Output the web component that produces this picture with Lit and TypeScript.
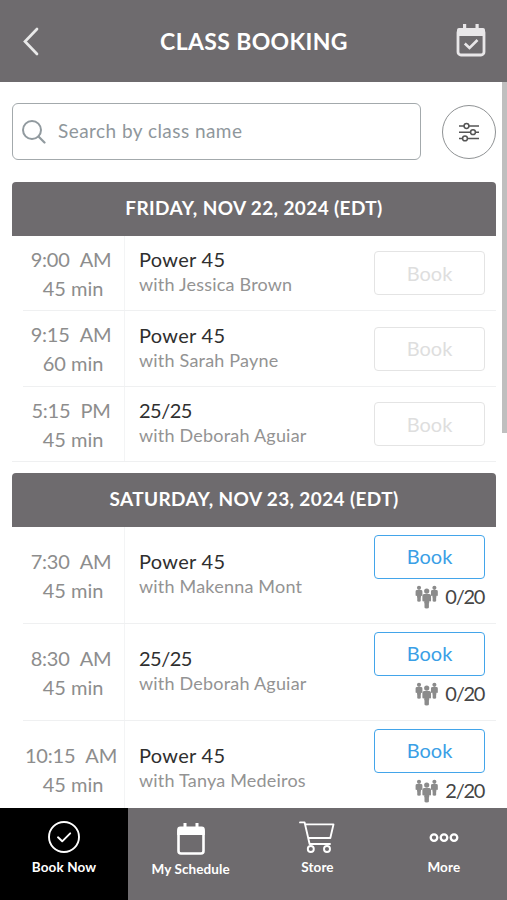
import { LitElement, html, css, svg, nothing } from "lit";
import { customElement, property } from "lit/decorators.js";

interface ClassItem {
  time: string;
  period: string;
  duration: string;
  name: string;
  coach: string;
  spots?: string;
}

interface Day {
  label: string;
  items: ClassItem[];
}

const DAYS: Day[] = [
  {
    label: "FRIDAY, NOV 22, 2024 (EDT)",
    items: [
      { time: "9:00", period: "AM", duration: "45 min", name: "Power 45", coach: "Jessica Brown" },
      { time: "9:15", period: "AM", duration: "60 min", name: "Power 45", coach: "Sarah Payne" },
      { time: "5:15", period: "PM", duration: "45 min", name: "25/25", coach: "Deborah Aguiar" },
    ],
  },
  {
    label: "SATURDAY, NOV 23, 2024 (EDT)",
    items: [
      { time: "7:30", period: "AM", duration: "45 min", name: "Power 45", coach: "Makenna Mont", spots: "0/20" },
      { time: "8:30", period: "AM", duration: "45 min", name: "25/25", coach: "Deborah Aguiar", spots: "0/20" },
      { time: "10:15", period: "AM", duration: "45 min", name: "Power 45", coach: "Tanya Medeiros", spots: "2/20" },
    ],
  },
];

const person = (x: number, y: number, s: number) => svg`
  <g transform="translate(${x} ${y}) scale(${s})">
    <circle cx="0" cy="2.400" r="2.700"></circle>
    <path d="M-2.600 5.400h5.200q1.900 0 1.900 1.800v5q0 .9-1 .9t-.9-.5v2.500h-.3v4.500q0 1-2.300 1t-2.300-1v-4.500h-.3v-2.500q0 .5-.9.5t-1-.9v-5q0-1.800 1.900-1.800z"></path>
  </g>`;

@customElement("class-row")
export class ClassRow extends LitElement {
  @property({ attribute: false }) item!: ClassItem;

  static styles = css`
    :host { display: block; }
    .row { display: flex; height: 100%; }
    .when {
      box-sizing: border-box;
      width: 102px;
      flex: none;
      border-right: 1.5px solid #f3f4f5;
      display: flex;
      flex-direction: column;
      justify-content: center;
      align-items: center;
      font-size: 20px;
      line-height: 29px;
      color: #8d8d8d;
      padding-top: 2px;
    }
    .time { margin-right: 5px; display: flex; gap: 10px; letter-spacing: -0.2px; }
    .duration { margin-right: 1px; }
    .what {
      flex: 1;
      display: flex;
      flex-direction: column;
      justify-content: center;
      padding-left: 14px;
      padding-bottom: 1px;
    }
    .name { font-size: 20px; line-height: 25px; color: #2f2f2f; letter-spacing: 0.3px; }
    .numeric { letter-spacing: -0.5px; }
    .coach { font-size: 18px; line-height: 25px; color: #939393; letter-spacing: 0.2px; }
    .action {
      width: 111px;
      flex: none;
      margin-right: 11px;
      display: flex;
      flex-direction: column;
      justify-content: center;
      padding-top: 1px;
    }
    .full { padding: 0 0 6px; }
    .book {
      box-sizing: border-box;
      height: 44px;
      border: 1.5px solid #e4e4e4;
      border-radius: 4px;
      display: flex;
      align-items: center;
      justify-content: center;
      font-size: 20px;
      color: #dedede;
      padding-bottom: 1px;
    }
    .open { border-color: #43a5ea; color: #3b9fe6; }
    .spots {
      display: flex;
      justify-content: flex-end;
      align-items: center;
      gap: 7px;
      height: 26px;
      margin-top: 4px;
      font-size: 20px;
      letter-spacing: -1.3px;
      color: #454545;
    }
    .people { width: 23px; height: 24px; fill: #8b8b8b; margin-top: 2px; }
    .count { margin-right: 1px; }
  `;

  render() {
    const { time, period, duration, name, coach, spots } = this.item;
    return html`
      <div class="row">
        <div class="when">
          <div class="time"><span>${time}</span><span>${period}</span></div>
          <div class="duration">${duration}</div>
        </div>
        <div class="what">
          <div class="name ${/[a-z]/i.test(name) ? "" : "numeric"}">${name}</div>
          <div class="coach">with ${coach}</div>
        </div>
        <div class="action ${spots ? "full" : ""}">
          <div class="book ${spots ? "open" : ""}">Book</div>
          ${spots
            ? html`<div class="spots">
                <svg class="people" viewBox="0 0 23 24">
                  ${person(4, 1, 0.76)}${person(19.4, 1, 0.76)}${person(11.7, 3.8, 0.96)}
                </svg>
                <span class="count">${spots}</span>
              </div>`
            : nothing}
        </div>
      </div>
    `;
  }
}

@customElement("app-root")
export class AppRoot extends LitElement {
  static styles = css`
    :host {
      display: flex;
      flex-direction: column;
      height: 900px;
      width: 507px;
      overflow: hidden;
      background: #fff;
      font-family: Lato, "Open Sans", sans-serif;
    }
    .header {
      flex: none;
      height: 82px;
      background: #6e6b6e;
      display: flex;
      align-items: center;
      justify-content: space-between;
      box-sizing: border-box;
      padding: 0 21px 0 23px;
    }
    .title { font-size: 23px; font-weight: 700; color: #fff; letter-spacing: 0.35px; margin-right: 1px; }
    .back { width: 30px; height: 30px; }
    .booked { width: 30px; height: 34px; margin-top: -3px; }
    .body { flex: 1; min-height: 0; display: flex; overflow: hidden; }
    .content { flex: 1; padding: 21px 6px 0 12px; }
    .scroll { width: 5px; height: 351px; background: #bfbfbf; }
    .tools { display: flex; align-items: center; gap: 21px; height: 57px; }
    .search {
      box-sizing: border-box;
      width: 409px;
      height: 57px;
      border: 1.5px solid #a3a9ac;
      border-radius: 6px;
      display: flex;
      align-items: center;
      padding-left: 9px;
      gap: 11px;
      font-size: 19px;
      letter-spacing: 0.45px;
      color: #8f979c;
    }
    .lens { width: 25px; height: 25px; }
    .placeholder { padding-bottom: 2px; }
    .filter {
      box-sizing: border-box;
      flex: none;
      width: 54px;
      height: 54px;
      border: 1px solid #8f9294;
      border-radius: 50%;
      display: flex;
      align-items: center;
      justify-content: center;
    }
    .day { width: 484px; margin-top: 22px; }
    .day + .day { margin-top: 11px; }
    .label {
      height: 53.5px;
      box-sizing: border-box;
      padding-bottom: 3px;
      border-radius: 4px 4px 0 0;
      background: #6e6b6e;
      color: #fff;
      font-size: 19px;
      font-weight: 700;
      letter-spacing: 0.38px;
      display: flex;
      align-items: center;
      justify-content: center;
    }
    class-row { box-sizing: border-box; height: 75.500px; margin-left: 11px; border-bottom: 1.500px solid #eff0f1; }
    class-row.tall { height: 97.200px; }
    class-row.last { margin-left: 0; padding-left: 11px; }
    .nav { flex: none; height: 92px; display: grid; grid-template-columns: 128px 1fr 1fr 1fr; background: #6e6b6e; color: #fff; }
    .tab { display: flex; flex-direction: column; align-items: center; padding-top: 10px; font-size: 13.500px; font-weight: 700; line-height: 20px; letter-spacing: 0.1px; }
    .active { background: #000; }
    .glyph { width: 38px; height: 36px; margin-bottom: 3px; }
    .low { padding-top: 12px; padding-right: 1px; }
    .line { fill: none; stroke: #fff; stroke-width: 1.900; stroke-linecap: round; stroke-linejoin: round; }
    .bold { stroke-width: 2.300; }
  `;

  render() {
    return html`
      <div class="header">
        <svg class="back" viewBox="0 0 30 30">
          <path d="M14 3L2 15.500L14 28" fill="none" stroke="#e9e9e9" stroke-width="2.700" stroke-linecap="round"></path>
        </svg>
        <div class="title">CLASS BOOKING</div>
        <svg class="booked" viewBox="0 0 30 34">
          <rect x="2" y="6.500" width="26" height="25.500" rx="3" fill="none" stroke="#e9e7e9" stroke-width="2.800"></rect>
          <path d="M1 7q0-2 2-2h24q2 0 2 2v6H1zM7 1h3.200v6H7zM19.500 1h3.200v6h-3.200z" fill="#e9e7e9"></path>
          <path d="M8.800 20.500l4.700 4.500l8-8" fill="none" stroke="#e9e7e9" stroke-width="2.600"></path>
        </svg>
      </div>
      <div class="body">
        <div class="content">
          <div class="tools">
            <div class="search">
              <svg class="lens" viewBox="0 0 25 25">
                <circle cx="10" cy="11" r="9" fill="none" stroke="#919a9f" stroke-width="2"></circle>
                <path d="M16.500 17.500l6 6" stroke="#919a9f" stroke-width="2.200" stroke-linecap="round"></path>
              </svg>
              <span class="placeholder">Search by class name</span>
            </div>
            <div class="filter">
              <svg width="22" height="22" viewBox="0 0 22 22" fill="#fff" stroke="#555" stroke-width="1.500">
                <path d="M1 5h20M1 11.200h20M1 17.400h20"></path>
                <circle cx="8.500" cy="5" r="2.400"></circle>
                <circle cx="15" cy="11.200" r="2.400"></circle>
                <circle cx="7" cy="17.400" r="2.400"></circle>
              </svg>
            </div>
          </div>
          ${DAYS.map(
            (day) => html`<div class="day">
              <div class="label">${day.label}</div>
              ${day.items.map(
                (item, i) => html`<class-row
                  class="${item.spots ? "tall" : ""} ${i === day.items.length - 1 ? "last" : ""}"
                  .item=${item}
                ></class-row>`
              )}
            </div>`
          )}
        </div>
        <div class="scroll"></div>
      </div>
      <div class="nav">
        <div class="tab active">
          <svg class="glyph line" viewBox="0 0 38 36">
            <circle cx="19" cy="19" r="15"></circle>
            <path d="M13 19.300l4.200 4l8-8"></path>
          </svg>
          <span>Book Now</span>
        </div>
        <div class="tab low">
          <svg class="glyph" viewBox="0 0 38 36">
            <rect x="6.500" y="9" width="25" height="24.500" rx="2.500" fill="none" stroke="#fff" stroke-width="2.600"></rect>
            <path d="M5.200 9.500q0-3 3-3h21.600q3 0 3 3v5.500H5.200zM11.500 3h3v6h-3zM23.500 3h3v6h-3z" fill="#fff"></path>
          </svg>
          <span>My Schedule</span>
        </div>
        <div class="tab">
          <svg class="glyph line" viewBox="0 0 38 36">
            <path d="M2 4.400h4.600l5 21.600h20.400M7.200 6.400h28.300l-3.200 13.600h-22"></path>
            <circle cx="12.800" cy="31" r="3"></circle>
            <circle cx="29" cy="31" r="3"></circle>
          </svg>
          <span>Store</span>
        </div>
        <div class="tab">
          <svg class="glyph line bold" viewBox="0 0 38 36">
            <circle cx="9" cy="19.600" r="3.300"></circle>
            <circle cx="19" cy="19.600" r="3.300"></circle>
            <circle cx="29" cy="19.600" r="3.300"></circle>
          </svg>
          <span>More</span>
        </div>
      </div>
    `;
  }
}
